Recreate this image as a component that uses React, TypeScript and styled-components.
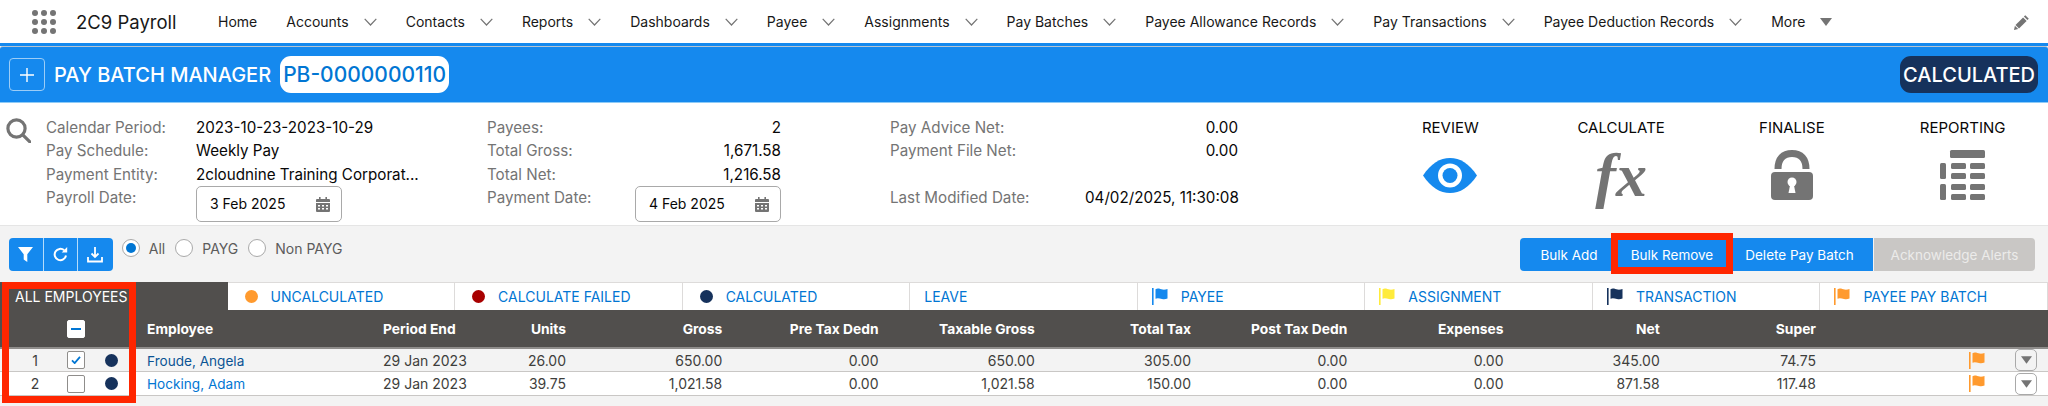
import React from 'react';
import styled, { createGlobalStyle } from 'styled-components';

const GlobalStyle = createGlobalStyle`
  html, body {
    margin: 0;
    padding: 0;
    height: 406px;
    overflow: hidden;
    background: #f3f3f3;
    font-family: Inter, "Liberation Sans", Arial, sans-serif;
    color: #080707;
  }
`;

const BLUE = '#1589ee';
const LINK = '#0176d3';
const NAVY = '#16325c';
const ORANGE = '#ff9a2e';
const GREY_ICON = '#747474';
const RED = '#ff2600';

const Page = styled.div`
  width: 2048px;
  height: 406px;
  display: flex;
  flex-direction: column;
  overflow: hidden;
`;

/* top nav */
const Nav = styled.nav`
  height: 43px;
  background: #fff;
  display: flex;
  align-items: center;
  padding-left: 32px;
  box-sizing: border-box;
`;

const Waffle = styled.div`
  width: 24px;
  display: grid;
  grid-template-columns: repeat(3, 6px);
  justify-content: space-between;
  row-gap: 3px;

  span {
    width: 6px;
    height: 6px;
    border-radius: 50%;
    background: ${GREY_ICON};
  }
`;

const AppName = styled.div`
  margin-left: 20px;
  width: 142px;
  font-size: 18.5px;
  color: #181818;
`;

const NavItems = styled.div`
  display: flex;
  align-items: center;
  gap: 29px;
`;

const NavItem = styled.div`
  display: flex;
  align-items: center;
  gap: 15px;
  font-size: 14px;
  color: #181818;
  white-space: nowrap;
`;

const NavEdit = styled.div`
  margin-left: auto;
  margin-right: 18px;
  display: flex;
`;

/* blue title bar */
const TitleStrip = styled.div`
  background: ${BLUE};
  height: 3px;
`;

const TitleBar = styled.header`
  height: 57px;
  box-sizing: border-box;
  background: ${BLUE};
  border-top: 1px solid #b8c4d0;
  border-bottom: 1px solid #8ecbf7;
  border-radius: 3px 3px 0 0;
  display: flex;
  align-items: center;
  padding: 0 10px 0 9px;
`;

const PlusButton = styled.button`
  width: 36px;
  height: 33px;
  padding: 0;
  background: transparent;
  border: 1px solid #9ccdf7;
  border-radius: 4px;
  display: flex;
  align-items: center;
  justify-content: center;
`;

const TitleText = styled.div`
  margin-left: 9px;
  font-size: 20px;
  font-weight: 500;
  color: #fff;
  white-space: nowrap;
`;

const Pill = styled.div<{ $dark?: boolean }>`
  height: 37px;
  box-sizing: border-box;
  border-radius: 11px;
  padding: 0 3px;
  display: flex;
  align-items: center;
  font-size: ${(p) => (p.$dark ? '20px' : '21px')};
  font-weight: 500;
  white-space: nowrap;
  background: ${(p) => (p.$dark ? NAVY : '#fff')};
  color: ${(p) => (p.$dark ? '#fff' : LINK)};
  margin-left: ${(p) => (p.$dark ? 'auto' : '9px')};
`;

/* info panel */
const Panel = styled.section`
  height: 123px;
  box-sizing: border-box;
  background: #fff;
  border-bottom: 1px solid #e5e5e5;
  padding-top: 13px;
  display: flex;
`;

const SearchCol = styled.div`
  width: 46px;
  flex: none;
  padding: 2px 0 0 6px;
  box-sizing: border-box;
`;

const InfoCol = styled.div<{ $width: number; $label: number; $value: number; $right?: boolean }>`
  width: ${(p) => p.$width}px;
  flex: none;
  display: grid;
  grid-template-columns: ${(p) => p.$label}px ${(p) => p.$value}px;
  grid-auto-rows: 23.4px;
  align-content: start;
  font-size: 15.2px;
  line-height: 23.4px;

  > div:nth-child(even) {
    text-align: ${(p) => (p.$right ? 'right' : 'left')};
  }
`;

const InfoLabel = styled.div`
  color: #747474;
  white-space: nowrap;
`;

const InfoValue = styled.div`
  color: #080707;
  white-space: nowrap;
`;

const DateBox = styled.div`
  width: 100%;
  height: 36px;
  box-sizing: border-box;
  border: 1px solid #a9a9a9;
  border-radius: 5px;
  background: #fff;
  display: flex;
  align-items: center;
  justify-content: space-between;
  padding: 0 11px 0 13px;
  font-size: 14px;
`;

const Actions = styled.div`
  flex: 1;
  display: grid;
  grid-template-columns: repeat(4, 1fr);
`;

const Action = styled.div`
  display: flex;
  flex-direction: column;
  align-items: center;
`;

const ActionTitle = styled.div`
  font-size: 15px;
  line-height: 23px;
  margin-bottom: 11px;
  color: #080707;
`;

const ActionIcon = styled.div`
  height: 50px;
  display: flex;
  align-items: center;
  justify-content: center;
`;

const FxGlyph = styled.span`
  font-family: "Liberation Serif", "Times New Roman", serif;
  font-style: italic;
  font-weight: 700;
  font-size: 62px;
  line-height: 50px;
  color: ${GREY_ICON};
`;

/* toolbar */
const Toolbar = styled.div`
  height: 56px;
  box-sizing: border-box;
  display: flex;
  align-items: flex-start;
  padding: 12px 13px 0 9px;
`;

const IconGroup = styled.div`
  display: flex;
  height: 33px;
  border-radius: 4px;
  overflow: hidden;
  background: ${BLUE};
`;

const IconButton = styled.button`
  width: 34.6px;
  padding: 0;
  border: 0;
  border-right: 1px solid #b5dcfb;
  background: transparent;
  display: flex;
  align-items: center;
  justify-content: center;

  &:last-child {
    border-right: 0;
  }
`;

const RadioGroup = styled.div`
  display: flex;
  align-items: center;
  height: 20px;
  margin: 0 0 0 9px;
`;

const RadioDot = styled.span<{ $on?: boolean }>`
  width: 18px;
  height: 18px;
  box-sizing: border-box;
  border: 1px solid #a9a9a9;
  border-radius: 50%;
  background: #fff;
  display: flex;
  align-items: center;
  justify-content: center;

  &::after {
    content: "";
    display: ${(p) => (p.$on ? 'block' : 'none')};
    width: 10px;
    height: 10px;
    border-radius: 50%;
    background: ${LINK};
  }
`;

const RadioLabel = styled.span`
  margin: 0 10px 0 9px;
  font-size: 14px;
  color: #5c5c5c;
`;

const ButtonGroup = styled.div`
  margin-left: auto;
  display: flex;
  height: 33px;
`;

const BatchButton = styled.button<{ $width: number; $off?: boolean; $marked?: boolean }>`
  position: relative;
  width: ${(p) => p.$width}px;
  padding: 0;
  border: 0;
  font-family: inherit;
  font-size: 13.5px;
  background: ${(p) => (p.$off ? '#c9c7c5' : BLUE)};
  color: ${(p) => (p.$off ? '#ecebea' : '#fff')};

  &:first-child {
    border-radius: 4px 0 0 4px;
  }

  &:last-child {
    border-radius: 0 4px 4px 0;
    margin-left: 1px;
  }

  ${(p) =>
    p.$marked &&
    `
    z-index: 1;

    &::after {
      content: "";
      position: absolute;
      top: -5px;
      bottom: -3px;
      left: -7px;
      right: -7px;
      border: 7px solid ${RED};
    }
  `}
`;

/* tabs and table */
const TableArea = styled.div`
  position: relative;
  flex: 1;
`;

const Tabs = styled.div`
  height: 28px;
  display: grid;
  grid-template-columns: repeat(9, 1fr);
`;

const Tab = styled.div<{ $active?: boolean }>`
  box-sizing: border-box;
  display: flex;
  align-items: center;
  gap: 13px;
  padding-left: ${(p) => (p.$active ? '15px' : '14px')};
  font-size: 14px;
  white-space: nowrap;
  background: ${(p) => (p.$active ? '#514f4d' : '#fff')};
  color: ${(p) => (p.$active ? '#fff' : LINK)};
  border-top: ${(p) => (p.$active ? '0' : '1px solid #dddbda')};
  border-right: ${(p) => (p.$active ? '0' : '1px solid #dddbda')};
`;

const TabDot = styled.span<{ $color: string }>`
  width: 13px;
  height: 13px;
  margin-left: 3px;
  border-radius: 50%;
  background: ${(p) => p.$color};
`;

const GRID = '42px 40px 30px 257px 87px 96px repeat(8, 156.25px) 169px 30px 22px';

const HeadRow = styled.div`
  height: 39px;
  box-sizing: border-box;
  padding: 0 0 0 14px;
  background: #514f4d;
  border-bottom: 2px solid #8f8d8b;
  display: grid;
  grid-template-columns: ${GRID};
  align-items: center;
  font-size: 13.8px;
  font-weight: 700;
  color: #fff;
`;

const DataRow = styled.div<{ $shaded?: boolean }>`
  height: 23.4px;
  box-sizing: border-box;
  padding: 0 0 0 14px;
  background: ${(p) => (p.$shaded ? '#f3f3f3' : '#fff')};
  border-bottom: 1px solid #c9c7c5;
  display: grid;
  grid-template-columns: ${GRID};
  align-items: center;
  font-size: 14px;
  color: #3e3e3c;
`;

const Cell = styled.div<{ $align?: string; $pad?: number }>`
  text-align: ${(p) => p.$align || 'left'};
  padding-left: ${(p) => p.$pad || 0}px;
  white-space: nowrap;
  display: block;
`;

const CenterCell = styled.div`
  display: flex;
  align-items: center;
  justify-content: center;
`;

const FlagCell = styled.div`
  display: flex;
  justify-content: flex-end;
`;

const NameLink = styled.a<{ $visited?: boolean }>`
  color: ${(p) => (p.$visited ? '#0b5394' : LINK)};
  text-decoration: none;
  font-size: 13.6px;
`;

const CheckBox = styled.span<{ $head?: boolean }>`
  width: 18px;
  height: 18px;
  box-sizing: border-box;
  border: 1px solid ${(p) => (p.$head ? '#fff' : '#8f8d8b')};
  border-radius: 2px;
  background: #fff;
  display: flex;
  align-items: center;
  justify-content: center;
`;

const MinusBar = styled.span`
  width: 10px;
  height: 2px;
  background: ${LINK};
`;

const StatusDot = styled.span`
  width: 13px;
  height: 13px;
  border-radius: 50%;
  background: ${NAVY};
`;

const MenuButton = styled.button`
  width: 22px;
  height: 22px;
  padding: 0;
  box-sizing: border-box;
  border: 1px solid #a9a9a9;
  border-radius: 5px;
  background: transparent;
  display: flex;
  align-items: center;
  justify-content: center;
`;

const RedBox = styled.div`
  position: absolute;
  left: 2px;
  top: 0;
  width: 134px;
  height: 121px;
  box-sizing: border-box;
  border: 7px solid ${RED};
  pointer-events: none;
`;

const Chevron = () => (
  <svg width="13" height="8" viewBox="0 0 13 8" fill="none">
    <path d="M.7.8 6.5 7 12.3.8" stroke={GREY_ICON} strokeWidth="1.2" />
  </svg>
);

const Triangle = ({ w = 12, h = 8 }: { w?: number; h?: number }) => (
  <svg width={w} height={h} viewBox="0 0 12 8">
    <path d="M0 0h12L6 8z" fill={GREY_ICON} />
  </svg>
);

const Flag = ({ color }: { color: string }) => (
  <svg width="16" height="17" viewBox="0 0 16 17" fill={color}>
    <rect x="0" y="0" width="1.6" height="17" />
    <path d="M3.5 1.2C6 -.2 8.5 1.2 10.5 1.6c1.800.3 3.500-.2 5-.6v9.600c-2 .8-3.500 1-5.500.5-2.500-.7-4.500-1.500-6.500-.3z" />
  </svg>
);

const CalendarIcon = () => (
  <svg width="14" height="15" viewBox="0 0 14 15" fill={GREY_ICON}>
    <rect x="3" y="0" width="1.600" height="3" />
    <rect x="9.400" y="0" width="1.600" height="3" />
    <path d="M1 2h12a1 1 0 0 1 1 1v2H0V3a1 1 0 0 1 1-1z" />
    <path d="M0 6h14v8a1 1 0 0 1-1 1H1a1 1 0 0 1-1-1zm2 2v1.500h2V8zm4 0v1.500h2V8zm4 0v1.500h2V8zm-8 3v1.500h2V11zm4 0v1.500h2V11zm4 0v1.500h2V11z" fillRule="evenodd" />
  </svg>
);

const SearchIcon = () => (
  <svg width="25" height="25" viewBox="0 0 25 25" fill="none" stroke={GREY_ICON} strokeWidth="3.200">
    <circle cx="10.500" cy="10.500" r="8.600" />
    <path d="M16.800 16.800 24 24" strokeLinecap="round" />
  </svg>
);

const PencilIcon = () => (
  <svg width="16" height="16" viewBox="0 0 16 16" fill={GREY_ICON}>
    <path d="M11.300 1.200 14.800 4.700 13.400 6.100 9.900 2.600z" />
    <path d="M9.100 3.400 12.600 6.900 5 14.500 1.500 11z" />
    <path d="M.9 11.800 4.200 15.100 0 16z" />
  </svg>
);

const EyeIcon = () => (
  <svg width="54" height="35" viewBox="0 0 54 35">
    <path d="M0 17.500C8 5.500 17 0 27 0s19 5.500 27 17.500C46 29.500 37 35 27 35S8 29.500 0 17.500z" fill={BLUE} />
    <circle cx="27" cy="17.500" r="12" fill="#fff" />
    <circle cx="27" cy="17.500" r="7.500" fill={BLUE} />
  </svg>
);

const LockIcon = () => (
  <svg width="42" height="50" viewBox="0 0 42 50" fill={GREY_ICON}>
    <path d="M7 19C7 8.500 12 3.500 21 3.500S35 8.500 35 19" fill="none" stroke={GREY_ICON} strokeWidth="7" />
    <rect x="0" y="22" width="42" height="28" rx="4" />
    <circle cx="21" cy="32" r="4.500" fill="#fff" />
    <path d="M19.500 33 17.500 43h7L22.500 33z" fill="#fff" />
  </svg>
);

const ReportIcon = () => (
  <svg width="45" height="50" viewBox="0 0 45 50" fill={GREY_ICON}>
    <rect x="10" y="0" width="35" height="8" rx="1.500" />
    <rect x="0" y="13" width="6" height="16" rx="1.500" />
    <rect x="0" y="34" width="6" height="16" rx="1.500" />
    {[13, 23, 34, 44].map((y) => (
      <React.Fragment key={y}>
        <rect x="11" y={y} width="15" height="6" rx="1.500" />
        <rect x="30" y={y} width="15" height="6" rx="1.500" />
      </React.Fragment>
    ))}
  </svg>
);

const navItems = ['Accounts', 'Contacts', 'Reports', 'Dashboards', 'Payee', 'Assignments', 'Pay Batches', 'Payee Allowance Records', 'Pay Transactions', 'Payee Deduction Records'];

const tabs: { label: string; dot?: string; flag?: string }[] = [
  { label: 'UNCALCULATED', dot: ORANGE },
  { label: 'CALCULATE FAILED', dot: '#a80000' },
  { label: 'CALCULATED', dot: NAVY },
  { label: 'LEAVE' },
  { label: 'PAYEE', flag: BLUE },
  { label: 'ASSIGNMENT', flag: '#ffeb3b' },
  { label: 'TRANSACTION', flag: NAVY },
  { label: 'PAYEE PAY BATCH', flag: ORANGE },
];

const numberHeads = ['Units', 'Gross', 'Pre Tax Dedn', 'Taxable Gross', 'Total Tax', 'Post Tax Dedn', 'Expenses', 'Net', 'Super'];

const rows = [
  { no: 1, name: 'Froude, Angela', end: '29 Jan 2023', checked: true, values: ['26.00', '650.00', '0.00', '650.00', '305.00', '0.00', '0.00', '345.00', '74.75'] },
  { no: 2, name: 'Hocking, Adam', end: '29 Jan 2023', checked: false, values: ['39.75', '1,021.58', '0.00', '1,021.58', '150.00', '0.00', '0.00', '871.58', '117.48'] },
];

export default function App() {
  return (
    <Page>
      <GlobalStyle />
      <Nav>
        <Waffle>
          {Array.from({ length: 9 }).map((_, i) => <span key={i} />)}
        </Waffle>
        <AppName>2C9 Payroll</AppName>
        <NavItems>
          <NavItem>Home</NavItem>
          {navItems.map((n) => (
            <NavItem key={n}>{n}<Chevron /></NavItem>
          ))}
          <NavItem>More<Triangle /></NavItem>
        </NavItems>
        <NavEdit><PencilIcon /></NavEdit>
      </Nav>

      <TitleStrip />
      <TitleBar>
        <PlusButton>
          <svg width="16" height="16" viewBox="0 0 16 16" stroke="#fff" strokeWidth="1.400">
            <path d="M8 1v14M1 8h14" />
          </svg>
        </PlusButton>
        <TitleText>PAY BATCH MANAGER</TitleText>
        <Pill>PB-0000000110</Pill>
        <Pill $dark>CALCULATED</Pill>
      </TitleBar>

      <Panel>
        <SearchCol><SearchIcon /></SearchCol>
        <InfoCol $width={441} $label={150} $value={146}>
          <InfoLabel>Calendar Period:</InfoLabel>
          <InfoValue>2023-10-23-2023-10-29</InfoValue>
          <InfoLabel>Pay Schedule:</InfoLabel>
          <InfoValue>Weekly Pay</InfoValue>
          <InfoLabel>Payment Entity:</InfoLabel>
          <InfoValue>2cloudnine Training Corporat...</InfoValue>
          <InfoLabel>Payroll Date:</InfoLabel>
          <DateBox>3 Feb 2025<CalendarIcon /></DateBox>
        </InfoCol>
        <InfoCol $width={403} $label={148} $value={146} $right>
          <InfoLabel>Payees:</InfoLabel>
          <InfoValue>2</InfoValue>
          <InfoLabel>Total Gross:</InfoLabel>
          <InfoValue>1,671.58</InfoValue>
          <InfoLabel>Total Net:</InfoLabel>
          <InfoValue>1,216.58</InfoValue>
          <InfoLabel>Payment Date:</InfoLabel>
          <DateBox>4 Feb 2025<CalendarIcon /></DateBox>
        </InfoCol>
        <InfoCol $width={475} $label={195} $value={153} $right>
          <InfoLabel>Pay Advice Net:</InfoLabel>
          <InfoValue>0.00</InfoValue>
          <InfoLabel>Payment File Net:</InfoLabel>
          <InfoValue>0.00</InfoValue>
          <InfoLabel />
          <InfoValue />
          <InfoLabel>Last Modified Date:</InfoLabel>
          <InfoValue>04/02/2025, 11:30:08</InfoValue>
        </InfoCol>
        <Actions>
          <Action><ActionTitle>REVIEW</ActionTitle><ActionIcon><EyeIcon /></ActionIcon></Action>
          <Action><ActionTitle>CALCULATE</ActionTitle><ActionIcon><FxGlyph>fx</FxGlyph></ActionIcon></Action>
          <Action><ActionTitle>FINALISE</ActionTitle><ActionIcon><LockIcon /></ActionIcon></Action>
          <Action><ActionTitle>REPORTING</ActionTitle><ActionIcon><ReportIcon /></ActionIcon></Action>
        </Actions>
      </Panel>

      <Toolbar>
        <IconGroup>
          <IconButton>
            <svg width="15" height="15" viewBox="0 0 15 15" fill="#fff"><path d="M0 0h15L9.300 7.200V15L5.700 12.500V7.200z" /></svg>
          </IconButton>
          <IconButton>
            <svg width="15" height="15" viewBox="0 0 15 15" fill="none" stroke="#fff" strokeWidth="2">
              <path d="M13 8.500A5.700 5.700 0 1 1 11.200 3.300" />
              <path d="M14.200 0v5.500H8.700z" fill="#fff" stroke="none" />
            </svg>
          </IconButton>
          <IconButton>
            <svg width="16" height="16" viewBox="0 0 16 16" fill="none" stroke="#fff" strokeWidth="1.800">
              <path d="M8 0v9.500M4.500 6.500 8 10l3.500-3.500M1 10v4.500h14V10" />
            </svg>
          </IconButton>
        </IconGroup>
        <RadioGroup>
          <RadioDot $on /><RadioLabel>All</RadioLabel>
          <RadioDot /><RadioLabel>PAYG</RadioLabel>
          <RadioDot /><RadioLabel>Non PAYG</RadioLabel>
        </RadioGroup>
        <ButtonGroup>
          <BatchButton $width={98}>Bulk Add</BatchButton>
          <BatchButton $width={108} $marked>Bulk Remove</BatchButton>
          <BatchButton $width={147}>Delete Pay Batch</BatchButton>
          <BatchButton $width={161} $off>Acknowledge Alerts</BatchButton>
        </ButtonGroup>
      </Toolbar>

      <TableArea>
        <Tabs>
          <Tab $active>ALL EMPLOYEES</Tab>
          {tabs.map((t) => (
            <Tab key={t.label}>
              {t.dot && <TabDot $color={t.dot} />}
              {t.flag && <Flag color={t.flag} />}
              {t.label}
            </Tab>
          ))}
        </Tabs>
        <HeadRow>
          <span />
          <CenterCell><CheckBox $head><MinusBar /></CheckBox></CenterCell>
          <span />
          <Cell $pad={21}>Employee</Cell>
          <Cell>Period End</Cell>
          {numberHeads.map((h) => <Cell key={h} $align="right">{h}</Cell>)}
        </HeadRow>
        {rows.map((r) => (
          <DataRow key={r.no} $shaded={r.no === 1}>
            <Cell $align="center">{r.no}</Cell>
            <CenterCell>
              <CheckBox>
                {r.checked && (
                  <svg width="10" height="8" viewBox="0 0 11 9" fill="none" stroke={LINK} strokeWidth="2">
                    <path d="M1 5l3 3 6-7" />
                  </svg>
                )}
              </CheckBox>
            </CenterCell>
            <CenterCell><StatusDot /></CenterCell>
            <Cell $pad={21}><NameLink $visited={r.no === 1}>{r.name}</NameLink></Cell>
            <Cell>{r.end}</Cell>
            {r.values.map((v, i) => <Cell key={i} $align="right">{v}</Cell>)}
            <FlagCell><Flag color={ORANGE} /></FlagCell>
            <span />
            <MenuButton><Triangle w={11} h={8} /></MenuButton>
          </DataRow>
        ))}
        <RedBox />
      </TableArea>
    </Page>
  );
}
